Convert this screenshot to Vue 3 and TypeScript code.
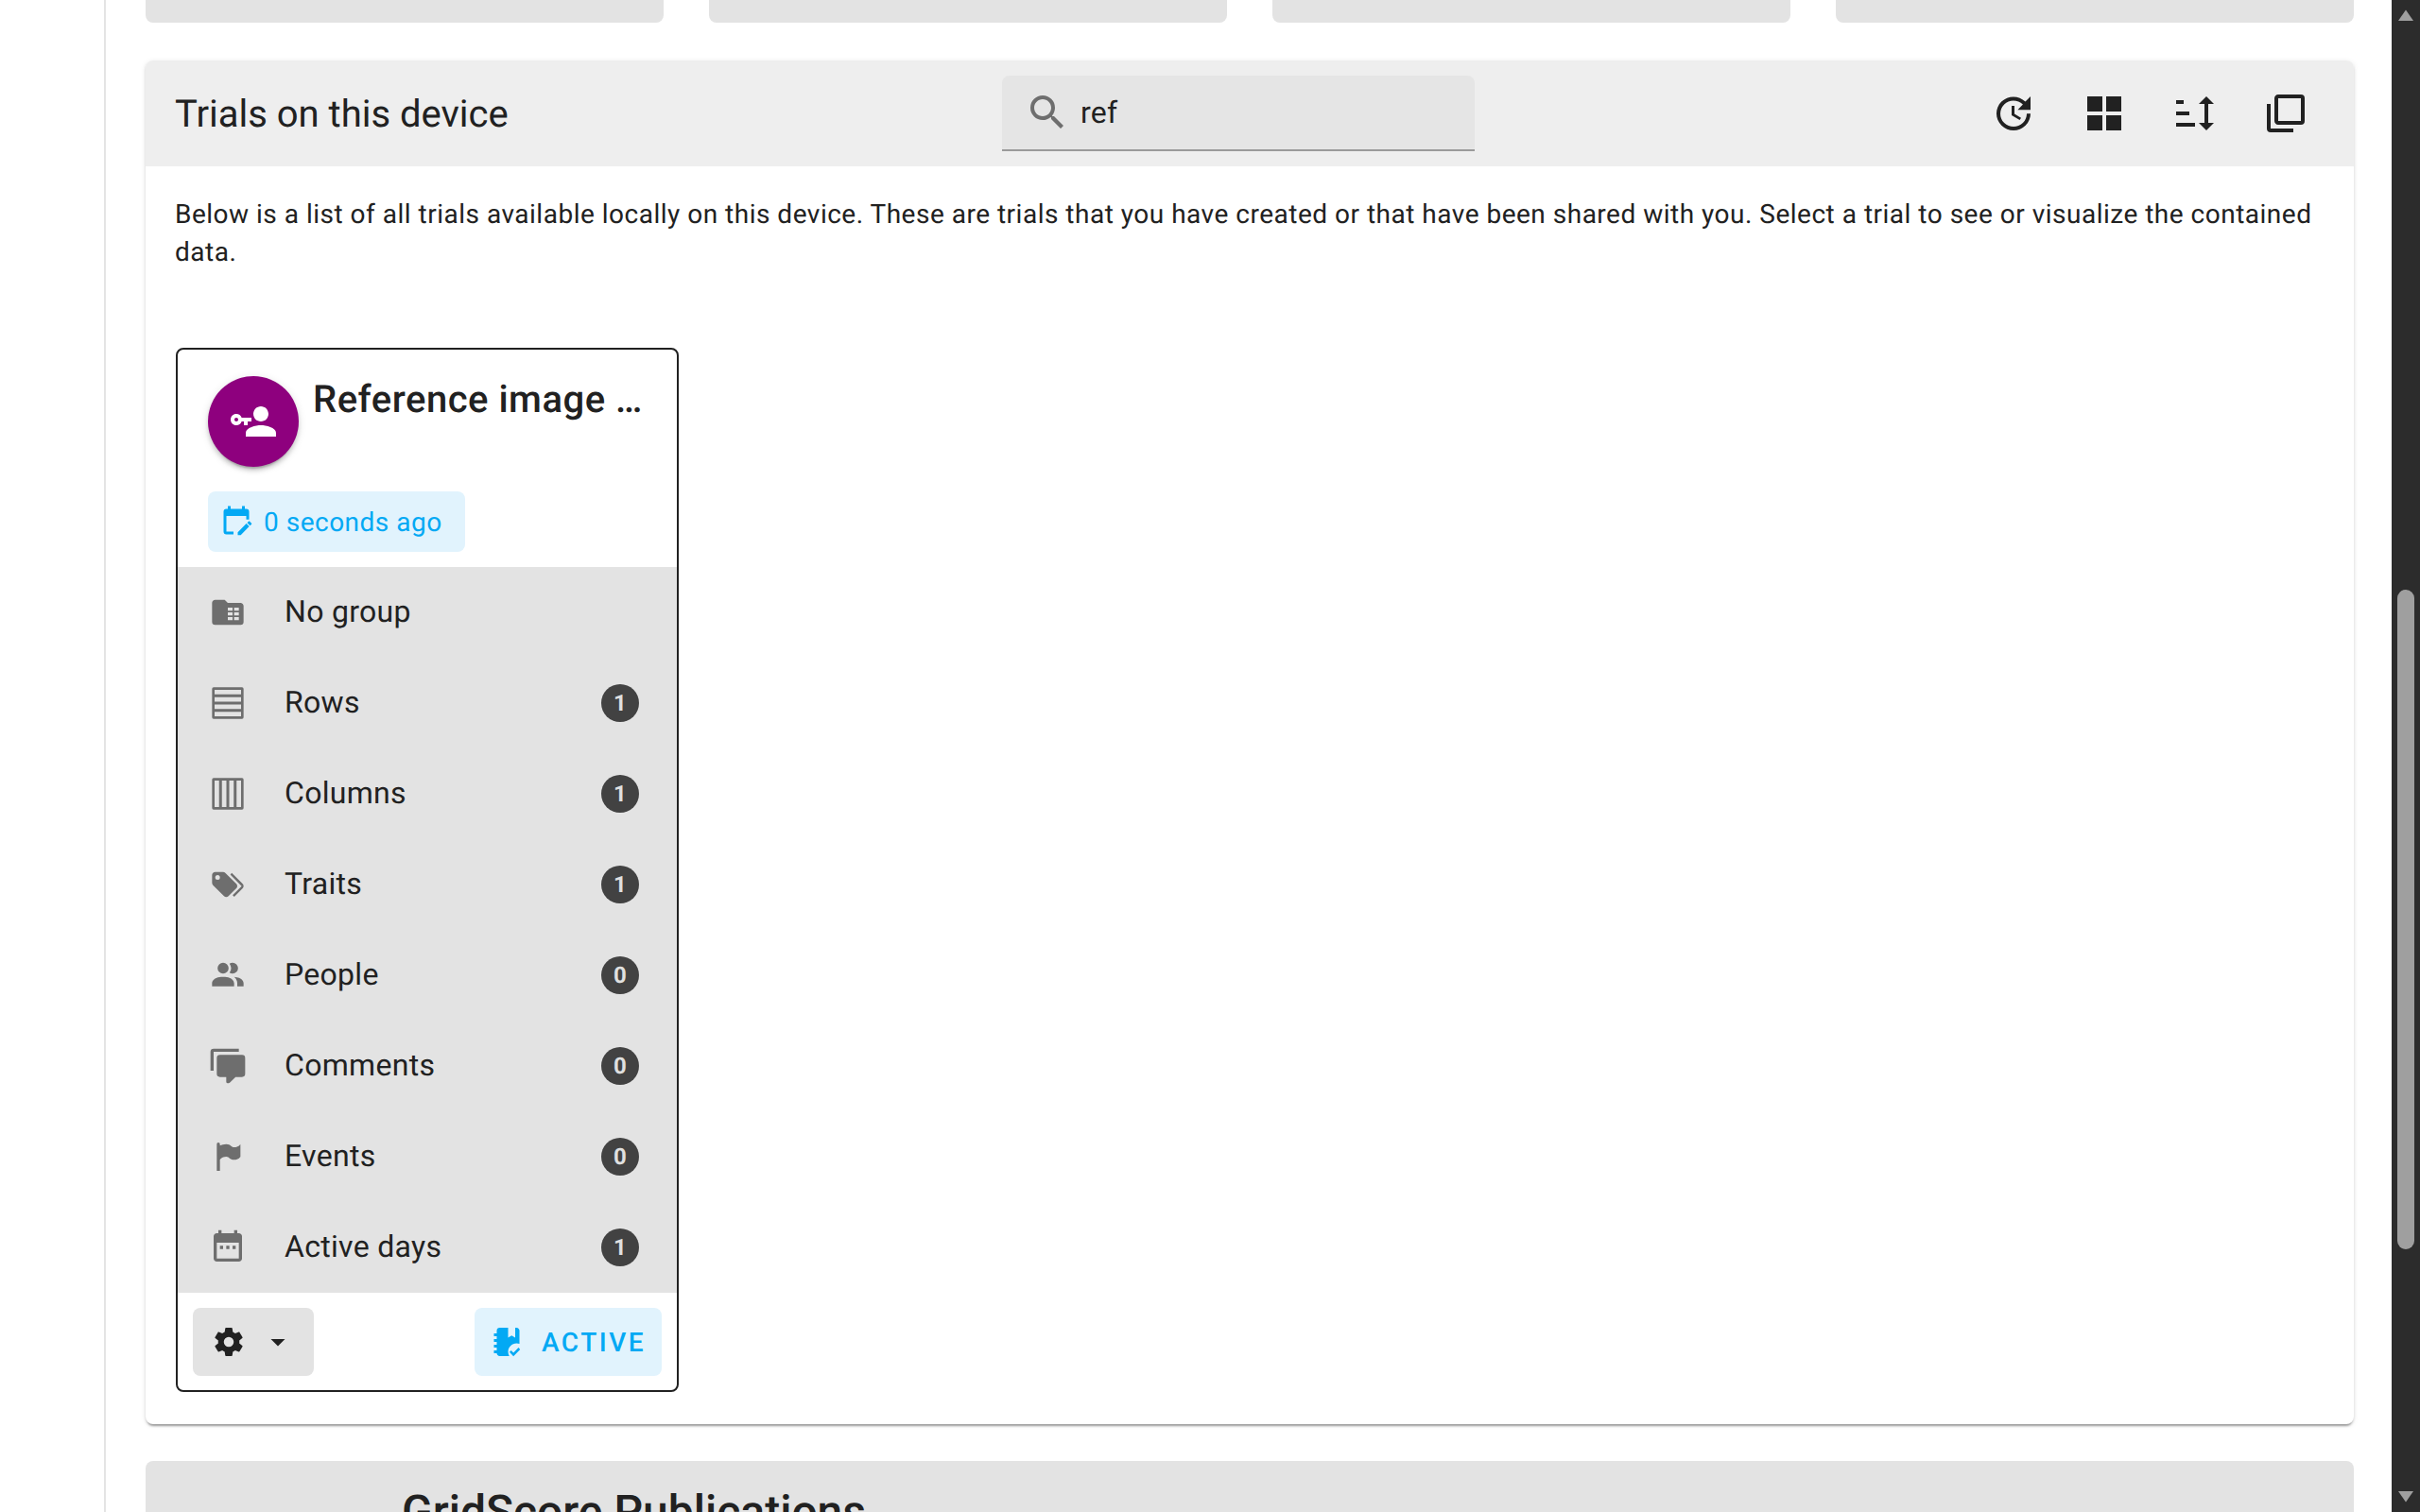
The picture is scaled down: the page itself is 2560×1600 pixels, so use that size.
<script setup lang="ts">
interface TrialStat {
  label: string
  icon: string
  count?: number
}

const topCards = [1, 2, 3, 4]

const icons = {
  magnify: 'M9.5,3A6.5,6.5 0 0,1 16,9.5C16,11.11 15.41,12.59 14.44,13.73L14.71,14H15.5L20.5,19L19,20.5L14,15.5V14.71L13.73,14.44C12.59,15.41 11.11,16 9.5,16A6.5,6.5 0 0,1 3,9.5A6.5,6.5 0 0,1 9.5,3M9.5,5C7,5 5,7 5,9.5C5,12 7,14 9.5,14C12,14 14,12 14,9.5C14,7 12,5 9.5,5Z',
  accountKey: 'M11 10V12H9V14H7V12H5.8C5.4 13.2 4.3 14 3 14C1.3 14 0 12.7 0 11S1.3 8 3 8C4.3 8 5.4 8.8 5.8 10H11M3 10C2.4 10 2 10.4 2 11S2.4 12 3 12 4 11.6 4 11 3.6 10 3 10M16 14C18.7 14 24 15.3 24 18V20H8V18C8 15.3 13.3 14 16 14M16 12C13.8 12 12 10.2 12 8S13.8 4 16 4 20 5.8 20 8 18.2 12 16 12Z',
  calendarEdit: 'M19 3h-1V1h-2v2H8V1H6v2H5a2 2 0 0 0-2 2v14a2 2 0 0 0 2 2h5v-2H5V8h14v2.5h2V5a2 2 0 0 0-2-2zM22.7 13.85l-1 1-2.05-2 1-1c.2-.21.54-.22.77 0l1.28 1.28c.19.2.19.52 0 .72zM13 19.44l6.06-6.06 2.05 2L15.11 21.5H13v-2.06z',
  cog: 'M12,15.5A3.5,3.5 0 0,1 8.5,12A3.5,3.5 0 0,1 12,8.5A3.5,3.5 0 0,1 15.5,12A3.5,3.5 0 0,1 12,15.5M19.43,12.97C19.47,12.65 19.5,12.33 19.5,12C19.5,11.67 19.47,11.34 19.43,11L21.54,9.37C21.73,9.22 21.78,8.95 21.66,8.73L19.66,5.27C19.54,5.05 19.27,4.96 19.05,5.05L16.56,6.05C16.04,5.66 15.5,5.32 14.87,5.07L14.5,2.42C14.46,2.18 14.25,2 14,2H10C9.75,2 9.54,2.18 9.5,2.42L9.13,5.07C8.5,5.32 7.96,5.66 7.44,6.05L4.95,5.05C4.73,4.96 4.46,5.05 4.34,5.27L2.34,8.73C2.21,8.95 2.27,9.22 2.46,9.37L4.57,11C4.53,11.34 4.5,11.67 4.5,12C4.5,12.33 4.53,12.65 4.57,12.97L2.46,14.63C2.27,14.78 2.21,15.05 2.34,15.27L4.34,18.73C4.46,18.95 4.73,19.03 4.95,18.95L7.44,17.94C7.96,18.34 8.5,18.68 9.13,18.93L9.5,21.58C9.54,21.82 9.75,22 10,22H14C14.25,22 14.46,21.82 14.5,21.58L14.87,18.93C15.5,18.67 16.04,18.34 16.56,17.94L19.05,18.95C19.27,19.03 19.54,18.95 19.66,18.73L21.66,15.27C21.78,15.05 21.73,14.78 21.54,14.63L19.43,12.97Z',
  notebookCheck: 'M5 4C5 2.89 5.9 2 7 2H13V9L15.5 7.5L18 9V2H19C20.05 2 21 3 21 4V13.34C20.37 13.12 19.7 13 19 13C15.69 13 13 15.69 13 19C13 20.09 13.29 21.12 13.81 22H7C5.95 22 5 21 5 20H3V18H5V16H3V14H5V12H3V10H5V8H3V6H5V4ZM16.75 22.16L14 19.16L15.16 18L16.75 19.59L20.34 16L21.5 17.41L16.75 22.16Z',
}

const toolbar = [
  'M21,10.12H14.22L16.96,7.3C14.23,4.6 9.81,4.5 7.08,7.2C4.35,9.91 4.35,14.28 7.08,17C9.81,19.7 14.23,19.7 16.96,17C18.32,15.65 19,14.08 19,12.1H21C21,14.08 20.12,16.65 18.36,18.39C14.85,21.87 9.15,21.87 5.64,18.39C2.14,14.92 2.11,9.28 5.62,5.81C9.13,2.34 14.76,2.34 18.27,5.81L21,3V10.12M12.5,8V12.25L16,14.33L15.28,15.54L11,13V8H12.5Z',
  'M3,11H11V3H3M3,21H11V13H3M13,21H21V13H13M13,3V11H21V3',
  'M2 5H6V7H2ZM2 11H9V13H2ZM2 17H12V19H2ZM18 3L22 7H19V17H22L18 21L14 17H17V7H14Z',
  'M20,16V4H8V16H20M22,16A2,2 0 0,1 20,18H8C6.89,18 6,17.1 6,16V4C6,2.89 6.89,2 8,2H20A2,2 0 0,1 22,4V16M16,20V22H4A2,2 0 0,1 2,20V7H4V20H16Z',
]

const stats: TrialStat[] = [
  { label: 'No group', icon: 'M4 4C2.89 4 2 4.89 2 6V18A2 2 0 0 0 4 20H20A2 2 0 0 0 22 18V8C22 6.89 21.1 6 20 6H12L10 4H4M12 9V11H15V9H12M16 9V11H19V9H16M12 12V14H15V12H12M16 12V14H19V12H16M12 15V17H15V15H12M16 15V17H19V15H16Z' },
  { label: 'Rows', icon: 'M3 2H21A1 1 0 0 1 22 3V21A1 1 0 0 1 21 22H3A1 1 0 0 1 2 21V3A1 1 0 0 1 3 2ZM3.6 3.6V6.45H20.4V3.6ZM3.6 8.25V11.1H20.4V8.25ZM3.6 12.9V15.75H20.4V12.9ZM3.6 17.55V20.4H20.4V17.55Z', count: 1 },
  { label: 'Columns', icon: 'M3 2H21A1 1 0 0 1 22 3V21A1 1 0 0 1 21 22H3A1 1 0 0 1 2 21V3A1 1 0 0 1 3 2ZM3.6 3.6V20.4H6.45V3.6ZM8.25 3.6V20.4H11.1V3.6ZM12.9 3.6V20.4H15.75V3.6ZM17.55 3.6V20.4H20.4V3.6Z', count: 1 },
  { label: 'Traits', icon: 'M5.5,9A1.5,1.5 0 0,0 7,7.5A1.5,1.5 0 0,0 5.5,6A1.5,1.5 0 0,0 4,7.5A1.5,1.5 0 0,0 5.5,9M17.41,11.58C17.77,11.94 18,12.44 18,13C18,13.55 17.78,14.05 17.41,14.41L12.41,19.41C12.05,19.77 11.55,20 11,20C10.45,20 9.95,19.78 9.58,19.41L2.59,12.42C2.22,12.05 2,11.55 2,11V6C2,4.89 2.89,4 4,4H9C9.55,4 10.05,4.22 10.41,4.58L17.41,11.58M13.54,5.71L14.54,4.71L21.41,11.58C21.78,11.94 22,12.45 22,13C22,13.55 21.78,14.05 21.42,14.41L16.04,19.79L15.04,18.79L20.75,13L13.54,5.71Z', count: 1 },
  { label: 'People', icon: 'M16 17V19H2V17S2 13 9 13 16 17 16 17M12.5 7.5A3.5 3.5 0 1 0 9 11A3.5 3.5 0 0 0 12.5 7.5M15.94 13A5.32 5.32 0 0 1 18 17V19H22V17S22 13.37 15.94 13M15 4A3.39 3.39 0 0 0 13.07 4.59A5 5 0 0 1 13.07 10.41A3.39 3.39 0 0 0 15 11A3.5 3.5 0 0 0 15 4Z', count: 0 },
  { label: 'Comments', icon: 'M12,23A1,1 0 0,1 11,22V19H7A2,2 0 0,1 5,17V7A2,2 0 0,1 7,5H21A2,2 0 0,1 23,7V17A2,2 0 0,1 21,19H16.9L13.2,22.71C13,22.89 12.76,23 12.5,23H12M3,15H1V3A2,2 0 0,1 3,1H19V3H3V15Z', count: 0 },
  { label: 'Events', icon: 'M6,3A1,1 0 0,1 7,4V4.88C8.06,4.44 9.5,4 11,4C14,4 14,6 16,6C19,6 20,4 20,4V12C20,12 19,14 16,14C13,14 13,12 11,12C8,12 7,14 7,14V21H5V4A1,1 0 0,1 6,3Z', count: 0 },
  { label: 'Active days', icon: 'M19 3H18V1H16V3H8V1H6V3H5C3.89 3 3 3.9 3 5V19C3 20.1 3.89 21 5 21H19C20.1 21 21 20.1 21 19V5C21 3.9 20.1 3 19 3M19 19H5V9H19V19M7 11V13H9V11H7M11 11V13H13V11H11M15 11V13H17V11H15Z', count: 1 },
]
</script>

<template>
  <div class="page">
    <nav class="rail"></nav>

    <main class="content">
      <div class="top-row">
        <div v-for="card in topCards" :key="card" class="top-card"></div>
      </div>

      <section class="panel">
        <header class="panel__bar">
          <h2 class="panel__title">Trials on this device</h2>
          <div class="search">
            <svg class="search__icon" viewBox="0 0 24 24"><path :d="icons.magnify" /></svg>
            <input class="search__input" type="text" value="ref" readonly />
          </div>
          <div class="tools">
            <button v-for="path in toolbar" :key="path" class="tools__btn" type="button">
              <svg viewBox="0 0 24 24"><path :d="path" /></svg>
            </button>
          </div>
        </header>

        <div class="panel__body">
          <p class="intro">
            Below is a list of all trials available locally on this device. These are trials that you have created or that have been shared with you. Select a trial to see or visualize the contained data.
          </p>

          <article class="trial">
            <div class="trial__head">
              <div class="avatar">
                <svg viewBox="0 0 24 24"><path :d="icons.accountKey" /></svg>
              </div>
              <h3 class="trial__name">Reference image trial</h3>
            </div>
            <div class="trial__meta">
              <span class="chip">
                <svg viewBox="0 0 24 24"><path :d="icons.calendarEdit" /></svg>
                0 seconds ago
              </span>
            </div>

            <ul class="stats">
              <li v-for="stat in stats" :key="stat.label" class="stats__row">
                <svg class="stats__icon" viewBox="0 0 24 24"><path fill-rule="evenodd" :d="stat.icon" /></svg>
                <span class="stats__label">{{ stat.label }}</span>
                <span v-if="stat.count !== undefined" class="stats__badge">{{ stat.count }}</span>
              </li>
            </ul>

            <footer class="trial__foot">
              <button class="btn btn--menu" type="button">
                <svg viewBox="0 0 24 24"><path :d="icons.cog" /></svg>
                <svg viewBox="0 0 24 24"><path d="M7 10l5 5 5-5z" /></svg>
              </button>
              <button class="btn btn--active" type="button">
                <svg viewBox="0 0 24 24"><path fill-rule="evenodd" :d="icons.notebookCheck" /></svg>
                ACTIVE
              </button>
            </footer>
          </article>
        </div>
      </section>

      <section class="next-panel">
        <h2 class="next-panel__title">GridScore Publications</h2>
      </section>
    </main>

    <aside class="scrollbar">
      <svg class="scrollbar__arrow" viewBox="0 0 18 14"><path d="M9 1.5L17 13H1Z" /></svg>
      <span class="scrollbar__thumb"></span>
      <svg class="scrollbar__arrow scrollbar__arrow--down" viewBox="0 0 18 14"><path d="M9 12.5L1 1H17Z" /></svg>
    </aside>
  </div>
</template>

<style>
html,
body {
  margin: 0;
  background: #fff;
  overflow: hidden;
}
</style>

<style scoped>
.page {
  display: flex;
  width: 2560px;
  height: 1600px;
  overflow: hidden;
  background: #fff;
  color: #212121;
  font-family: Roboto, "Liberation Sans", sans-serif;
  text-rendering: geometricPrecision;
}

.rail {
  flex: none;
  width: 110px;
  border-right: 2px solid #e4e4e4;
}

.content {
  flex: 1;
  min-width: 0;
  padding: 0 40px 0 42px;
}

.top-row {
  display: grid;
  grid-template-columns: repeat(4, 1fr);
  gap: 48px;
  margin-bottom: 40px;
}

.top-card {
  height: 24px;
  background: #e3e3e3;
  border-radius: 0 0 8px 8px;
}

.panel {
  border-radius: 8px;
  background: #fff;
  box-shadow: 0 4px 2px -2px rgba(0, 0, 0, 0.25), 0 2px 3px 0 rgba(0, 0, 0, 0.14), 0 1px 6px 0 rgba(0, 0, 0, 0.08);
  margin-bottom: 39px;
}

.panel__bar {
  display: flex;
  align-items: center;
  height: 112px;
  padding: 0 24px 0 31px;
  background: #eee;
  border-radius: 8px 8px 0 0;
}

.panel__title {
  flex: none;
  width: 875px;
  margin: 0;
  font-size: 40px;
  font-weight: 400;
}

.search {
  display: flex;
  align-items: center;
  box-sizing: border-box;
  width: 500px;
  height: 80px;
  padding-left: 24px;
  background: #e5e5e5;
  border-bottom: 2px solid #9a9a9a;
  border-radius: 8px 8px 0 0;
}

.search__icon {
  flex: none;
  width: 48px;
  height: 48px;
  fill: #6e6e6e;
}

.search__input {
  flex: 1;
  min-width: 0;
  margin-left: 11px;
  padding: 0;
  border: 0;
  outline: 0;
  background: transparent;
  color: #212121;
  font: 400 32px Roboto, sans-serif;
  letter-spacing: 0.3px;
  text-rendering: geometricPrecision;
}

.tools {
  display: flex;
  margin-left: auto;
}

.tools__btn {
  display: flex;
  align-items: center;
  justify-content: center;
  width: 96px;
  height: 96px;
  padding: 0;
  border: 0;
  background: none;
}

.tools__btn svg {
  width: 48px;
  height: 48px;
  fill: #212121;
}

.panel__body {
  padding: 31px 32px 34px;
}

.intro {
  margin: 0 0 81px -1px;
  font-size: 28px;
  line-height: 40px;
  letter-spacing: 0.5px;
}

.trial {
  display: flex;
  flex-direction: column;
  box-sizing: border-box;
  width: 532px;
  border: 2px solid #212121;
  border-radius: 8px;
  background: #fff;
  overflow: hidden;
}

.trial__head {
  display: flex;
  padding: 28px 32px 0;
}

.avatar {
  flex: none;
  display: flex;
  align-items: center;
  justify-content: center;
  width: 96px;
  height: 96px;
  border-radius: 50%;
  background: #8e007e;
  box-shadow: 0 6px 2px -4px rgba(0, 0, 0, 0.2), 0 4px 4px 0 rgba(0, 0, 0, 0.14), 0 2px 10px 0 rgba(0, 0, 0, 0.12);
}

.avatar svg {
  width: 48px;
  height: 48px;
  fill: #fff;
}

.trial__name {
  flex: 1;
  min-width: 0;
  margin: -7px 0 0 15px;
  overflow: hidden;
  font-size: 40px;
  font-weight: 500;
  line-height: 64px;
  letter-spacing: 0.5px;
  white-space: nowrap;
  text-overflow: ellipsis;
}

.trial__meta {
  padding: 26px 32px 16px;
}

.chip {
  display: inline-flex;
  align-items: center;
  gap: 11px;
  height: 64px;
  padding: 0 24px 0 12px;
  border-radius: 8px;
  background: #e1f3fd;
  color: #03a9f4;
  font-size: 28px;
  letter-spacing: 0.5px;
  vertical-align: top;
}

.chip svg {
  width: 36px;
  height: 36px;
  fill: currentColor;
}

.stats {
  margin: 0;
  padding: 0;
  list-style: none;
  background: #e3e3e3;
}

.stats__row {
  display: flex;
  align-items: center;
  height: 96px;
  padding: 0 40px 0 33px;
}

.stats__icon {
  flex: none;
  width: 40px;
  height: 40px;
  fill: #6e6e6e;
}

.stats__label {
  flex: 1;
  margin: 0 0 3px 40px;
  font-size: 32px;
  letter-spacing: 0.3px;
}

.stats__badge {
  flex: none;
  display: flex;
  align-items: center;
  justify-content: center;
  width: 40px;
  height: 40px;
  border-radius: 50%;
  background: #424242;
  color: #e0e0e0;
  font-size: 24px;
  font-weight: 700;
}

.trial__foot {
  display: flex;
  justify-content: space-between;
  padding: 16px 16px 15px;
}

.btn {
  display: flex;
  align-items: center;
  height: 72px;
  padding: 0;
  border: 0;
  border-radius: 8px;
  font-family: inherit;
  text-rendering: geometricPrecision;
}

.btn svg {
  flex: none;
  width: 36px;
  height: 36px;
  fill: currentColor;
}

.btn--menu {
  width: 128px;
  padding-left: 20px;
  gap: 16px;
  background: #e3e3e3;
  color: #212121;
}

.btn--active {
  width: 198px;
  padding-left: 16px;
  gap: 19px;
  background: #e1f3fd;
  color: #03a9f4;
  font-size: 28px;
  font-weight: 500;
  letter-spacing: 2.5px;
}

.next-panel {
  height: 120px;
  padding: 22px 0 0 271px;
  background: #e3e3e3;
  border-radius: 8px 8px 0 0;
}

.next-panel__title {
  margin: 0;
  font-size: 48px;
  font-weight: 500;
  line-height: 64px;
}

.scrollbar {
  flex: none;
  display: flex;
  flex-direction: column;
  align-items: center;
  box-sizing: border-box;
  width: 30px;
  padding: 9px 0;
  background: #2c2c2c;
}

.scrollbar__arrow {
  flex: none;
  width: 18px;
  height: 14px;
  fill: #9f9f9f;
}

.scrollbar__arrow--down {
  margin-top: auto;
}

.scrollbar__thumb {
  width: 18px;
  height: 698px;
  margin-top: 601px;
  border-radius: 9px;
  background: #9f9f9f;
}
</style>
